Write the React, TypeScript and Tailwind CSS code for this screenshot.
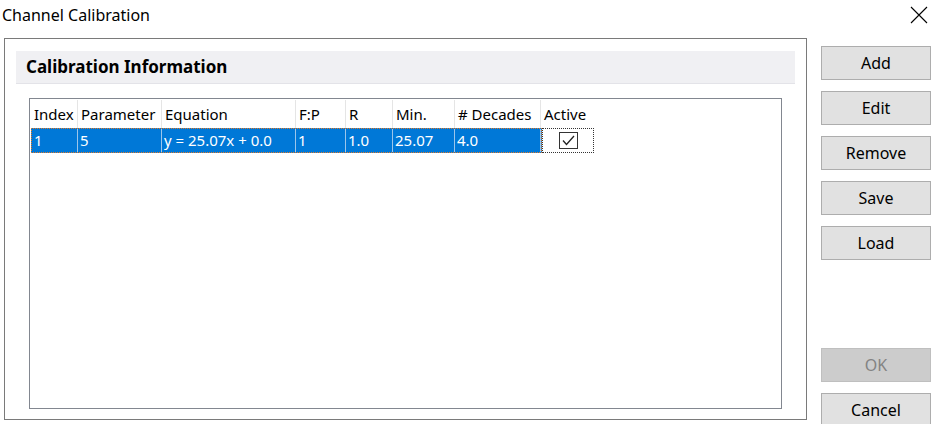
const cols = [
  { h: 'Index', v: '1', w: 'w-[47px]' },
  { h: 'Parameter', v: '5', w: 'w-[84px]' },
  { h: 'Equation', v: 'y = 25.07x +  0.0', w: 'w-[134px]' },
  { h: 'F:P', v: '1', w: 'w-[50px]' },
  { h: 'R', v: '1.0', w: 'w-[47px]' },
  { h: 'Min.', v: '25.07', w: 'w-[62px]' },
  { h: '# Decades', v: '4.0', w: 'w-[86px]' },
];

function Btn({ label, disabled }: { label: string; disabled?: boolean }) {
  return (
    <div
      className={`w-[110px] h-[34px] flex items-center justify-center border text-[16px] ${
        disabled ? 'bg-[#cccccc] border-[#bfbfbf] text-[#838383]' : 'bg-[#e1e1e1] border-[#adadad] text-black'
      }`}
    >
      {label}
    </div>
  );
}

export default function App() {
  return (
    <div className="w-[938px] h-[424px] bg-white relative overflow-hidden text-black" style={{ fontFamily: '"Segoe UI", "Noto Sans", "Open Sans", sans-serif' }}>
      <div className="h-[30px] flex items-center justify-between pl-[2px] pr-[10px]">
        <span className="text-[16px]">Channel Calibration</span>
        <svg width="18" height="18" viewBox="0 0 18 18" className="mt-[0px]">
          <path d="M1 1L17 17M17 1L1 17" stroke="#000" strokeWidth="1.1" />
        </svg>
      </div>
      <div className="flex pl-[4px] pt-[8px] gap-[14px]">
        <div className="w-[803px] h-[382px] border border-[#7a7a7a] pt-[12px] px-[11px]">
          <div className="h-[33px] bg-[#f0f0f3] border-b border-[#e3e3e8] flex items-center pl-[10px] text-[17px] font-bold">
            Calibration Information
          </div>
          <div className="mt-[14px] ml-[13px] w-[753px] h-[311px] border border-[#828790] p-[1px]">
            <div className="flex h-[28px] text-[15px]">
              {cols.map((c) => (
                <div key={c.h} className={`${c.w} border-r border-[#e5e5e5] pl-[3px] flex items-center whitespace-nowrap`}>
                  {c.h}
                </div>
              ))}
              <div className="w-[52px] pl-[3px] flex items-center">Active</div>
            </div>
            <div className="flex h-[25px] text-[15px] text-white">
              <div className="flex bg-[#0078d7] border border-dotted border-[#e07a2a]">
                {cols.map((c, i) => (
                  <div key={c.h} className={`${i === 0 ? 'w-[46px]' : c.w} border-r border-[#9cc5ea] pl-[2px] flex items-center whitespace-nowrap`}>
                    {c.v}
                  </div>
                ))}
              </div>
              <div className="w-[52px] bg-white border border-dotted border-[#333] flex items-center justify-center">
                <div className="w-[19px] h-[17px] border border-[#333] flex items-center justify-center">
                  <svg width="13" height="11" viewBox="0 0 13 11">
                    <path d="M1 5.5L4.5 9.5L12 1" fill="none" stroke="#222" strokeWidth="1.3" />
                  </svg>
                </div>
              </div>
            </div>
          </div>
        </div>
        <div className="flex flex-col gap-[11px] pt-[8px]">
          <Btn label="Add" />
          <Btn label="Edit" />
          <Btn label="Remove" />
          <Btn label="Save" />
          <Btn label="Load" />
          <div className="h-[66px]" />
          <Btn label="OK" disabled />
          <Btn label="Cancel" />
        </div>
      </div>
    </div>
  );
}
